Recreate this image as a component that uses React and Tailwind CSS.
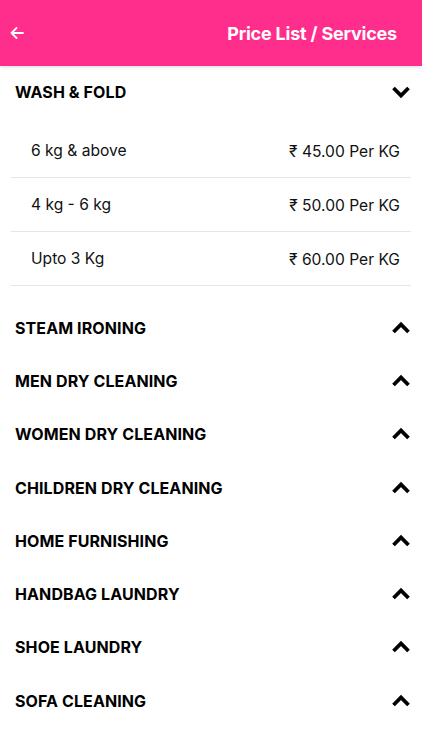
import { useState } from "react";

const sections = [
  {
    title: "WASH & FOLD",
    items: [
      { name: "6 kg & above", price: "₹ 45.00 Per KG" },
      { name: "4 kg - 6 kg", price: "₹ 50.00 Per KG" },
      { name: "Upto 3 Kg", price: "₹ 60.00 Per KG" },
    ],
  },
  { title: "STEAM IRONING", items: [] },
  { title: "MEN DRY CLEANING", items: [] },
  { title: "WOMEN DRY CLEANING", items: [] },
  { title: "CHILDREN DRY CLEANING", items: [] },
  { title: "HOME FURNISHING", items: [] },
  { title: "HANDBAG LAUNDRY", items: [] },
  { title: "SHOE LAUNDRY", items: [] },
  { title: "SOFA CLEANING", items: [] },
];

function Chevron({ down }) {
  return (
    <svg width="20" height="14" viewBox="0 0 20 14" className="shrink-0">
      <polyline
        points={down ? "2.5,3 10,10.5 17.5,3" : "2.5,11 10,3.5 17.5,11"}
        fill="none"
        stroke="#000"
        strokeWidth="3.8"
      />
    </svg>
  );
}

export default function App() {
  const [open, setOpen] = useState("WASH & FOLD");

  return (
    <div
      className="w-[422px] h-[750px] overflow-hidden bg-white text-black"
      style={{ fontFamily: "Inter, 'Noto Sans', 'DejaVu Sans', sans-serif" }}
    >
      {/* Top bar */}
      <div className="h-[66px] bg-[#ff2d8b] flex items-center justify-between pl-[10px] pr-[25px] shadow-[0_1px_3px_rgba(0,0,0,0.15)]">
        <svg width="14" height="12" viewBox="0 0 14 12">
          <path
            d="M13 6H1.5M6.5 1L1.5 6l5 5"
            fill="none"
            stroke="#fff"
            strokeWidth="1.8"
            strokeLinecap="round"
            strokeLinejoin="round"
          />
        </svg>
        <h1 className="text-white text-[18px] font-bold tracking-[-0.2px]">
          Price List / Services
        </h1>
      </div>

      {sections.map((s) => {
        const isOpen = open === s.title;
        return (
          <div key={s.title}>
            <button
              onClick={() => setOpen(isOpen ? "" : s.title)}
              className={`w-full flex items-center justify-between pl-[15px] pr-[11px] ${
                isOpen ? "h-[52px]" : "h-[53.3px]"
              }`}
            >
              <span className="text-[16px] font-bold tracking-[0.1px]">
                {s.title}
              </span>
              <Chevron down={isOpen} />
            </button>
            {isOpen && s.items.length > 0 && (
              <div className="pt-[6px] pb-[15px] px-[11px]">
                {s.items.map((it) => (
                  <div
                    key={it.name}
                    className="h-[54px] flex items-center justify-between pl-[20px] pr-[11px] border-b border-[#e6e6e6] text-[15.6px] text-[#111]"
                  >
                    <span className="mt-[1px]">{it.name}</span>
                    <span className="mt-[2px]">{it.price}</span>
                  </div>
                ))}
              </div>
            )}
          </div>
        );
      })}
    </div>
  );
}
